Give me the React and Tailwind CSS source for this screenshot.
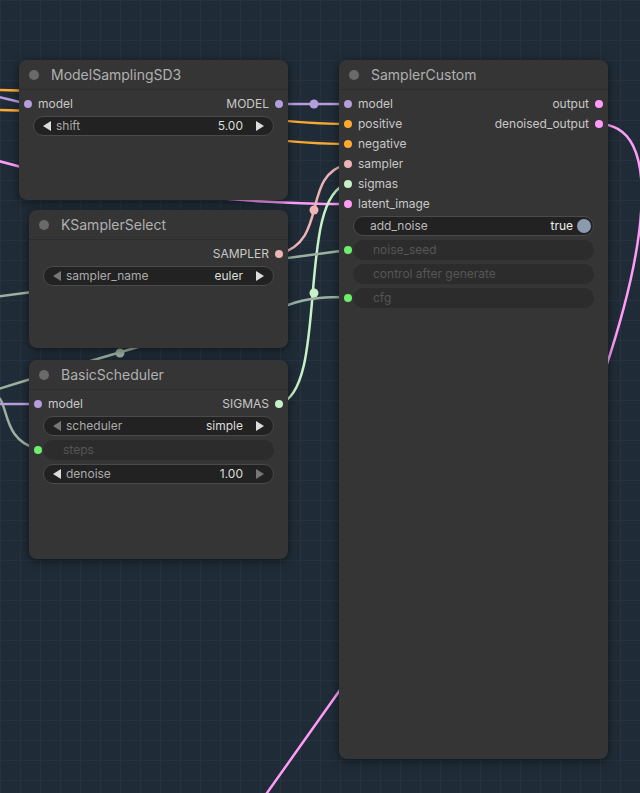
import React from "react";

const Dot = ({ c, side }) => (
  <span
    className={`absolute top-1/2 -translate-y-1/2 w-2 h-2 rounded-full ${side === "l" ? "left-[5px]" : "right-[5px]"}`}
    style={{ background: c }}
  />
);

const Tri = ({ dir, dim }) => (
  <svg width="10" height="12" viewBox="0 0 10 12" className="shrink-0">
    <path d={dir === "l" ? "M9 1 L1 6 L9 11 Z" : "M1 1 L9 6 L1 11 Z"} fill={dim ? "#777" : "#ddd"} />
  </svg>
);

const Row = ({ left, right, lc, rc }) => (
  <div className="relative h-5 flex items-center justify-between px-[19px] text-[12px] text-[#c8c8c8]">
    {lc && <Dot c={lc} side="l" />}
    <span>{left}</span>
    <span>{right}</span>
    {rc && <Dot c={rc} side="r" />}
  </div>
);

const Combo = ({ label, value, dimL, dimR }) => (
  <div className="px-[14px] py-[2px]">
    <div className="h-5 rounded-full bg-[#222] border border-[#4a4a4a] flex items-center px-2 gap-1 text-[12px]">
      <Tri dir="l" dim={dimL} />
      <span className="text-[#aaa] flex-1">{label}</span>
      <span className="text-[#ddd] mr-2">{value}</span>
      <Tri dir="r" dim={dimR} />
    </div>
  </div>
);

const Ghost = ({ label, dot }) => (
  <div className="relative px-[14px] py-[2px]">
    {dot && <Dot c={dot} side="l" />}
    <div className="h-5 rounded-full bg-[#2c2c2c] flex items-center pl-5 text-[12px] text-[#555]">{label}</div>
  </div>
);

const Node = ({ title, className, children }) => (
  <div className={`absolute rounded-lg bg-[#353535] shadow-[0_2px_8px_rgba(0,0,0,0.5)] ${className}`}>
    <div className="h-[30px] flex items-center gap-3 px-[10px] text-[14px] text-[#b0b0b0] border-b border-[#2e2e2e]">
      <span className="w-[10px] h-[10px] rounded-full bg-[#6a6a6a]" />
      {title}
    </div>
    <div className="pt-[4px]">{children}</div>
  </div>
);

export default function App() {
  return (
    <div
      className="relative w-[640px] h-[793px] overflow-hidden bg-[#1f2b36] bg-[linear-gradient(#26323d_1px,transparent_1px),linear-gradient(90deg,#26323d_1px,transparent_1px)] bg-[size:20px_20px]"
      style={{ fontFamily: "Inter, 'Noto Sans', sans-serif" }}
    >
      <svg className="absolute inset-0" width="640" height="793">
        <g fill="none" strokeWidth="2.5" strokeLinecap="round">
          <path d="M-5 90 C100 90 240 124 348 124" stroke="#ffa931" />
          <path d="M-5 110 C100 110 240 144 348 144" stroke="#ffa931" />
          <path d="M-5 96 L28 104" stroke="#b39ddb" />
          <path d="M280 104 L348 104" stroke="#b39ddb" />
          <path d="M-5 160 C100 190 240 204 348 204" stroke="#ff9cf9" />
          <path d="M279 254 C330 240 300 175 348 164" stroke="#ecb4b4" />
          <path d="M279 404 C330 390 295 195 348 184" stroke="#c8f0c8" />
          <path d="M-5 297 C40 290 200 270 348 250" stroke="#9bb0a0" />
          <path d="M288 305 C310 297 330 297 348 297" stroke="#9bb0a0" />
          <path d="M-5 390 C60 370 160 340 200 330" stroke="#9bb0a0" />
          <path d="M-5 395 C10 400 0 440 38 449" stroke="#9bb0a0" />
          <path d="M-5 404 L38 404" stroke="#b39ddb" />
          <path d="M598 124 C665 124 645 250 605 370 L340 690 L262 800" stroke="#ff9cf9" />
        </g>
        <circle cx="314" cy="104" r="4.5" fill="#b39ddb" />
        <circle cx="314" cy="210" r="4.5" fill="#ecb4b4" />
        <circle cx="314" cy="293" r="4.5" fill="#c8f0c8" />
        <circle cx="120" cy="353" r="4.5" fill="#9bb0a0" />
      </svg>

      <Node title="ModelSamplingSD3" className="left-[19px] top-[60px] w-[269px] h-[140px]">
        <Row left="model" right="MODEL" lc="#b39ddb" rc="#b39ddb" />
        <Combo label="shift" value="5.00" />
      </Node>

      <Node title="KSamplerSelect" className="left-[29px] top-[210px] w-[259px] h-[138px]">
        <Row right="SAMPLER" rc="#ecb4b4" />
        <Combo label="sampler_name" value="euler" dimL />
      </Node>

      <Node title="BasicScheduler" className="left-[29px] top-[360px] w-[259px] h-[199px]">
        <Row left="model" right="SIGMAS" lc="#b39ddb" rc="#c8f0c8" />
        <Combo label="scheduler" value="simple" dimL />
        <Ghost label="steps" dot="#6cf06c" />
        <Combo label="denoise" value="1.00" dimR />
      </Node>

      <Node title="SamplerCustom" className="left-[339px] top-[60px] w-[269px] h-[699px]">
        <Row left="model" right="output" lc="#b39ddb" rc="#ff9cf9" />
        <Row left="positive" right="denoised_output" lc="#ffa931" rc="#ff9cf9" />
        <Row left="negative" lc="#ffa931" />
        <Row left="sampler" lc="#ecb4b4" />
        <Row left="sigmas" lc="#c8f0c8" />
        <Row left="latent_image" lc="#ff9cf9" />
        <div className="px-[14px] py-[2px]">
          <div className="h-5 rounded-full bg-[#222] border border-[#4a4a4a] flex items-center pl-4 pr-[2px] text-[12px]">
            <span className="text-[#bbb] flex-1">add_noise</span>
            <span className="text-[#eee] mr-1">true</span>
            <span className="w-[14px] h-[14px] rounded-full bg-[#8a9bb0]" />
          </div>
        </div>
        <Ghost label="noise_seed" dot="#6cf06c" />
        <Ghost label="control after generate" />
        <Ghost label="cfg" dot="#6cf06c" />
      </Node>
    </div>
  );
}
